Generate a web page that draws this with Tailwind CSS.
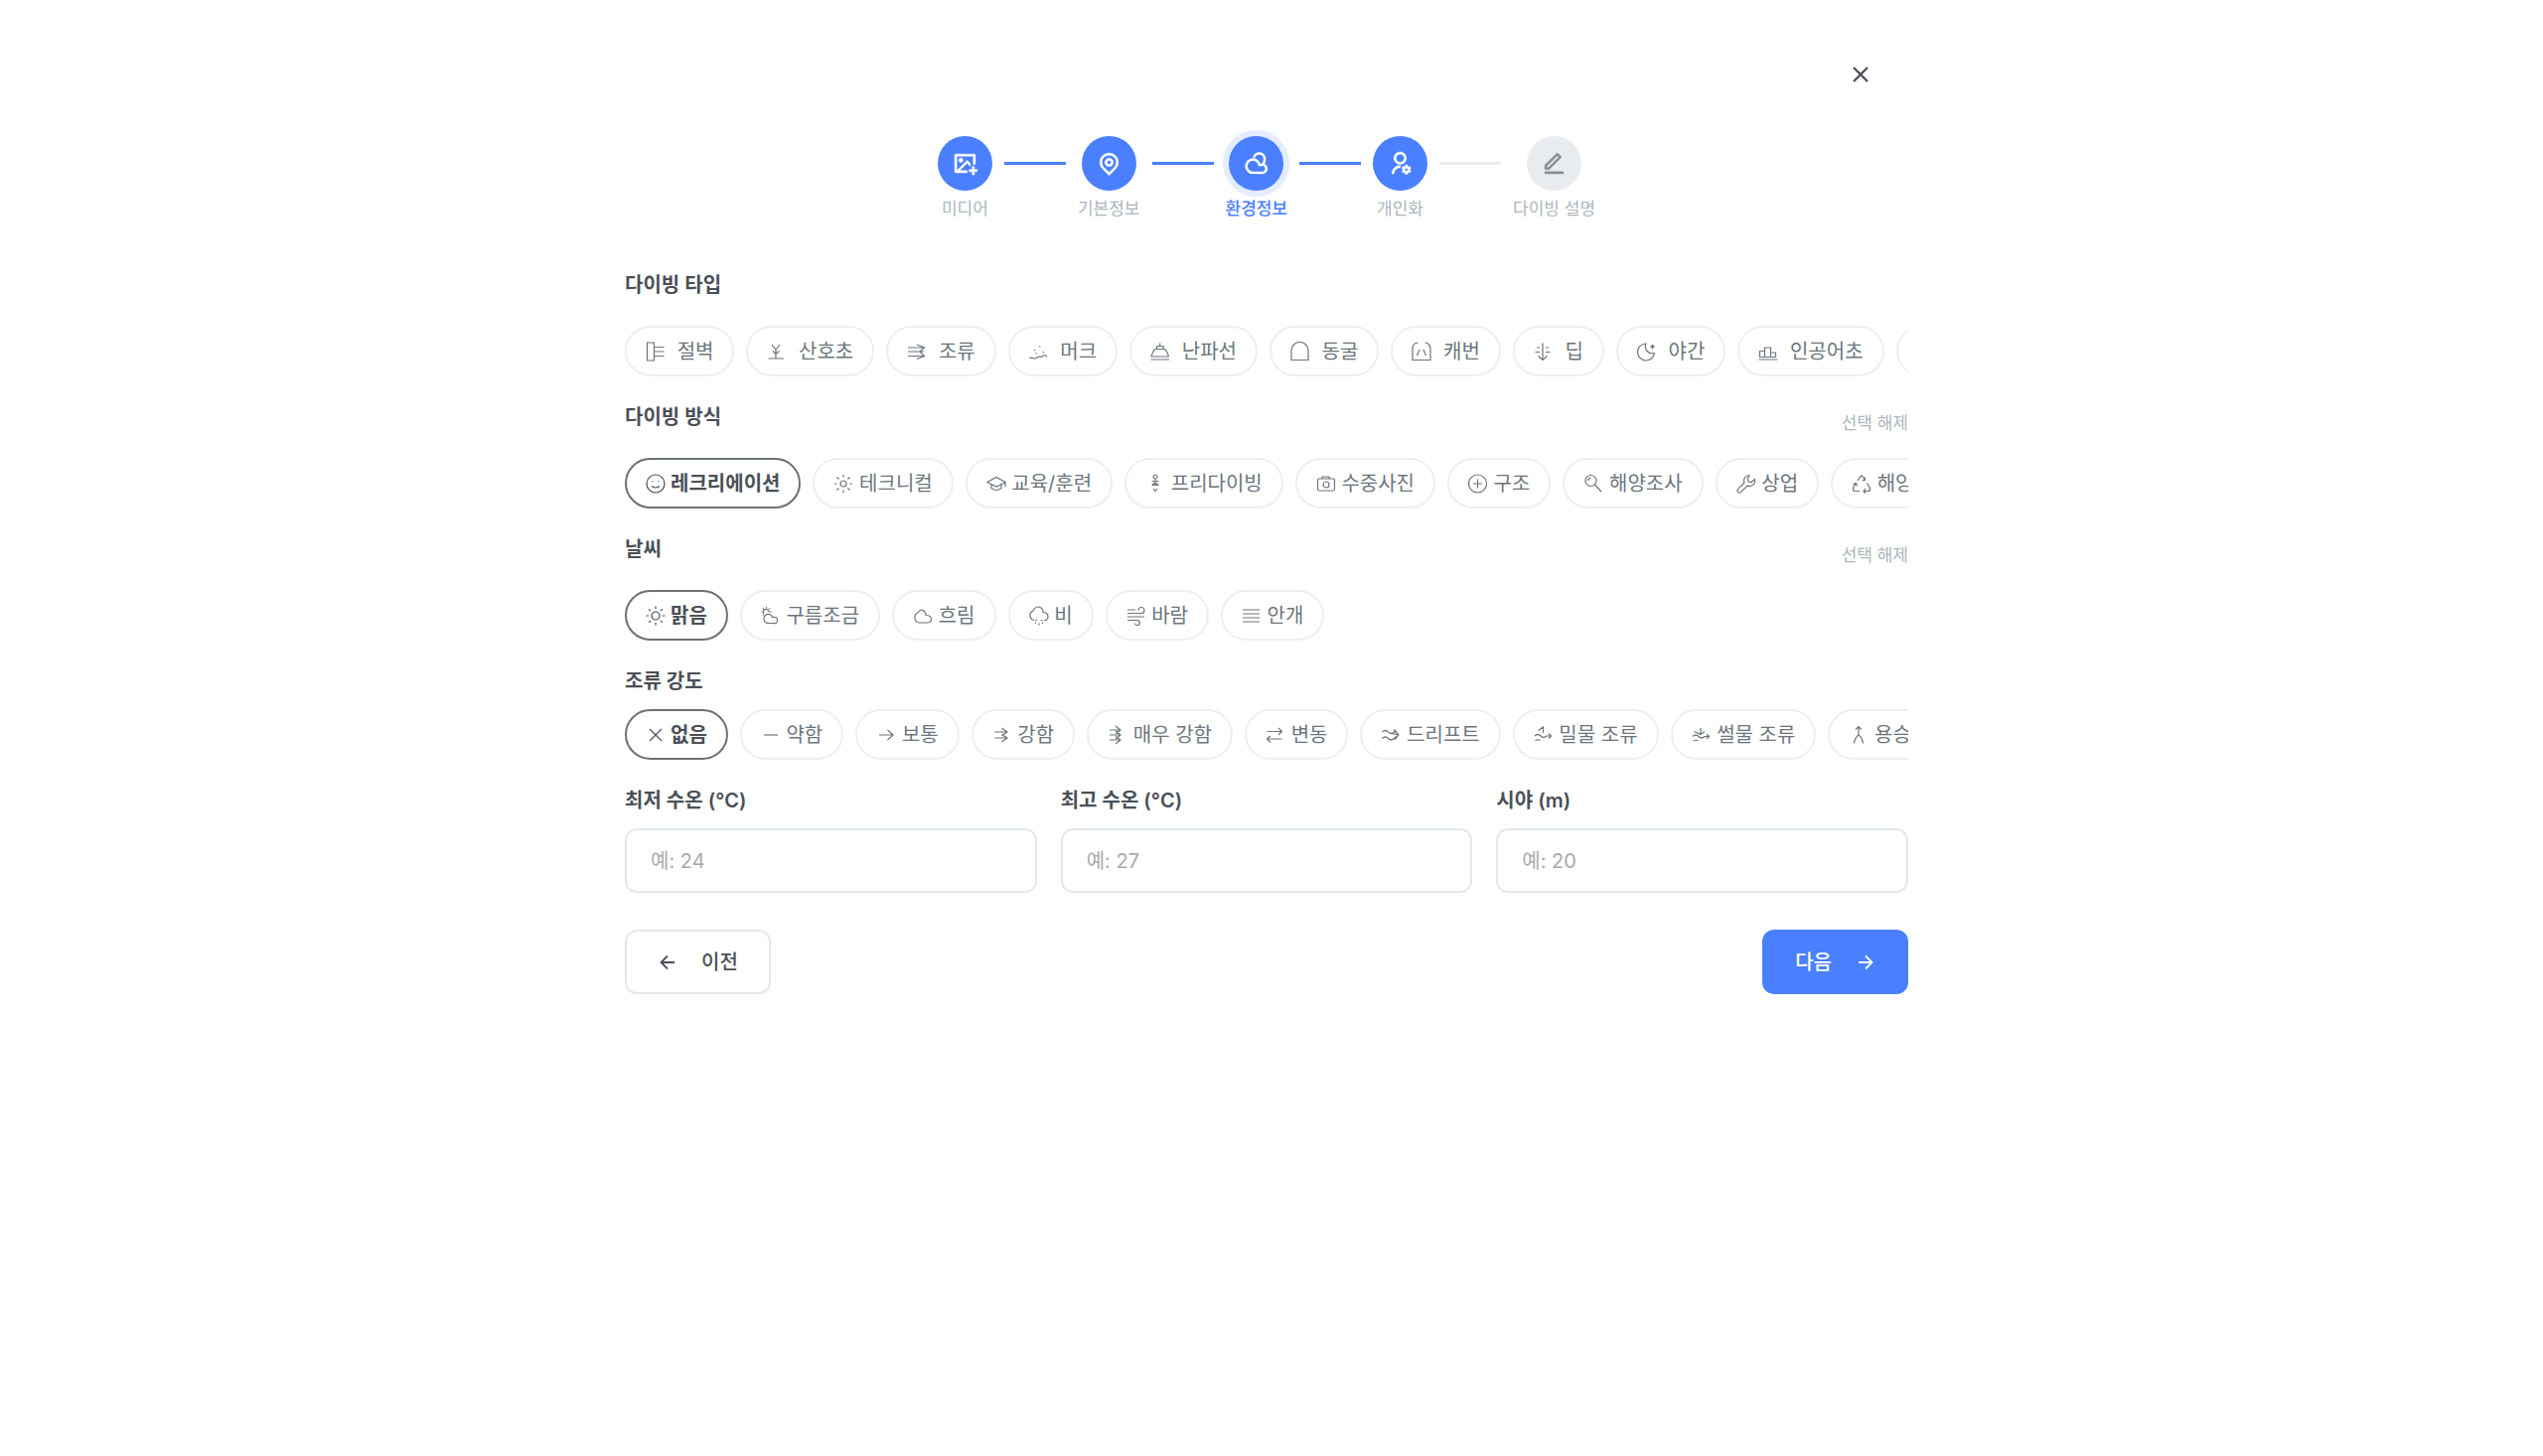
<!DOCTYPE html>
<html lang="ko">
<head>
    <meta charset="UTF-8">
    <meta name="viewport" content="width=device-width, initial-scale=1.0">
    <title>다이빙 로그 - 환경정보</title>
    <script src="https://cdn.jsdelivr.net/npm/@tailwindcss/browser@4"></script>
</head>
<body class="min-h-screen bg-white pr-[10px] font-[Inter,'Noto_Sans_CJK_KR',sans-serif] text-xl leading-7 text-[#495057]">
    <main class="mx-auto max-w-[1292px] pt-[51px]">
        <div class="flex justify-end pr-6">
            <button type="button" aria-label="닫기" class="flex size-12 items-center justify-center">
                <svg class="size-6" viewBox="0 0 24 24" fill="none" stroke="currentColor" stroke-width="2.3"><path d="M5 5l14 14M19 5L5 19"/></svg>
            </button>
        </div>

        <!-- 단계 표시 -->
        <ol class="mt-[38px] flex justify-center gap-3 text-[17px] leading-6 text-[#adb5bd]">
            <li class="flex flex-col items-center gap-[6px]">
                <span class="flex size-[55px] items-center justify-center rounded-full bg-[#4a80ff] text-white">
                    <svg class="size-[25px]" viewBox="0 0 24 24" fill="currentColor" stroke="currentColor" stroke-width="0.5"><path d="M21 15v3h3v2h-3v3h-2v-3h-3v-2h3v-3h2zm.008-12c.548 0 .992.445.992.993V13h-2V5H4v13.999L14 9l3 3v2.829l-3-3L6.827 19H14v2H2.992A.993.993 0 0 1 2 20.007V3.993A1 1 0 0 1 2.992 3h18.016zM8 7a2 2 0 1 1 0 4 2 2 0 0 1 0-4z"/></svg>
                </span>
                <span>미디어</span>
            </li>
            <li class="mt-[26px] h-[3px] w-[62px] bg-[#4a80ff]" aria-hidden="true"></li>
            <li class="flex flex-col items-center gap-[6px]">
                <span class="flex size-[55px] items-center justify-center rounded-full bg-[#4a80ff] text-white">
                    <svg class="size-[25px]" viewBox="0 0 24 24" fill="currentColor" stroke="currentColor" stroke-width="0.5"><path d="M12 23.728l-6.364-6.364a9 9 0 1 1 12.728 0L12 23.728zm4.95-7.778a7 7 0 1 0-9.9 0L12 20.9l4.95-4.95zM12 15a4 4 0 1 1 0-8 4 4 0 0 1 0 8zm0-2a2 2 0 1 0 0-4 2 2 0 0 0 0 4z"/></svg>
                </span>
                <span>기본정보</span>
            </li>
            <li class="mt-[26px] h-[3px] w-[62px] bg-[#4a80ff]" aria-hidden="true"></li>
            <li class="flex flex-col items-center gap-[6px]" aria-current="step">
                <span class="flex size-[55px] items-center justify-center rounded-full bg-[#4a80ff] text-white ring-6 ring-[#e4ecff]">
                    <svg class="size-[25px]" viewBox="0 0 24 24" fill="none" stroke="currentColor" stroke-width="2.4"><path d="M15.300 14.500a6.400 6.400 0 1 0-6.300 6.500h9a3.900 3.900 0 1 0-2.700-6.700M9.900 6.300a5.300 5.300 0 0 1 10.400 1.700q0 3-1.800 4.900"/></svg>
                </span>
                <span class="font-medium text-[#4a80ff]">환경정보</span>
            </li>
            <li class="mt-[26px] h-[3px] w-[62px] bg-[#4a80ff]" aria-hidden="true"></li>
            <li class="flex flex-col items-center gap-[6px]">
                <span class="flex size-[55px] items-center justify-center rounded-full bg-[#4a80ff] text-white">
                    <svg class="size-[25px]" viewBox="0 0 24 24" fill="currentColor" stroke="currentColor" stroke-width="0.5"><path d="M12 14v2a6 6 0 0 0-6 6H4a8 8 0 0 1 8-8zm0-1c-3.315 0-6-2.685-6-6s2.685-6 6-6 6 2.685 6 6-2.685 6-6 6zm0-2c2.21 0 4-1.79 4-4s-1.79-4-4-4-4 1.79-4 4 1.79 4 4 4zm2.595 7.812a3.51 3.51 0 0 1 0-1.623l-.992-.573 1-1.732.992.573A3.496 3.496 0 0 1 17 14.645V13.5h2v1.145c.532.158 1.012.44 1.405.812l.992-.573 1 1.732-.992.573a3.51 3.51 0 0 1 0 1.622l.992.573-1 1.732-.992-.573a3.496 3.496 0 0 1-1.405.812V22.5h-2v-1.145a3.496 3.496 0 0 1-1.405-.812l-.992.573-1-1.732.992-.572zM18 19.5a1.5 1.5 0 1 0 0-3 1.5 1.5 0 0 0 0 3z"/></svg>
                </span>
                <span>개인화</span>
            </li>
            <li class="mt-[26px] h-[3px] w-[62px] bg-[#e9ecef]" aria-hidden="true"></li>
            <li class="flex flex-col items-center gap-[6px]">
                <span class="flex size-[55px] items-center justify-center rounded-full bg-[#e9ecef] text-[#868e96]">
                    <svg class="size-[25px]" viewBox="0 0 24 24" fill="currentColor" stroke="currentColor" stroke-width="0.5"><path d="M6.414 16L16.556 5.858l-1.414-1.414L5 14.586V16h1.414zm.829 2H3v-4.243L14.435 2.322a1 1 0 0 1 1.414 0l2.829 2.829a1 1 0 0 1 0 1.414L7.243 18zM3 20h18v2H3v-2z"/></svg>
                </span>
                <span>다이빙 설명</span>
            </li>
        </ol>

        <form class="mt-[51px] flex flex-col gap-[27px]">
            <section>
                <div class="mb-[15px] flex h-10 items-start justify-between">
                    <h2 class="font-semibold">다이빙 타입</h2>
                </div>
                <div id="dive-type" class="flex gap-3 overflow-x-auto [scrollbar-width:none]"></div>
            </section>

            <section>
                <div class="mb-[15px] flex h-10 items-start justify-between">
                    <h2 class="font-semibold">다이빙 방식</h2>
                    <button type="button" data-clear="dive-style" class="py-2 text-[17px] leading-6 text-[#adb5bd]">선택 해제</button>
                </div>
                <div id="dive-style" class="flex gap-3 overflow-x-auto [scrollbar-width:none]"></div>
            </section>

            <section>
                <div class="mb-[15px] flex h-10 items-start justify-between">
                    <h2 class="font-semibold">날씨</h2>
                    <button type="button" data-clear="weather" class="py-2 text-[17px] leading-6 text-[#adb5bd]">선택 해제</button>
                </div>
                <div id="weather" class="flex gap-3 overflow-x-auto [scrollbar-width:none]"></div>
            </section>

            <section>
                <h2 class="mb-[14px] font-semibold">조류 강도</h2>
                <div id="current" class="flex gap-3 overflow-x-auto [scrollbar-width:none]"></div>
            </section>

            <div class="grid grid-cols-3 gap-6">
                <div>
                    <label for="min-temp" class="mb-[14px] block font-semibold">최저 수온 (°C)</label>
                    <input id="min-temp" type="text" inputmode="decimal" placeholder="예: 24" class="h-[65px] w-full rounded-xl border-2 border-[#e4e8ec] px-6 placeholder:text-[#a9a9a9]">
                </div>
                <div>
                    <label for="max-temp" class="mb-[14px] block font-semibold">최고 수온 (°C)</label>
                    <input id="max-temp" type="text" inputmode="decimal" placeholder="예: 27" class="h-[65px] w-full rounded-xl border-2 border-[#e4e8ec] px-6 placeholder:text-[#a9a9a9]">
                </div>
                <div>
                    <label for="visibility" class="mb-[14px] block font-semibold">시야 (m)</label>
                    <input id="visibility" type="text" inputmode="decimal" placeholder="예: 20" class="h-[65px] w-full rounded-xl border-2 border-[#e4e8ec] px-6 placeholder:text-[#a9a9a9]">
                </div>
            </div>

            <div class="mt-[10px] flex justify-between">
                <button type="button" class="flex h-[65px] items-center gap-6 rounded-xl border-2 border-[#e4e8ec] px-[31px] font-medium">
                    <svg class="size-5" viewBox="0 0 20 20" fill="none" stroke="currentColor" stroke-width="1.8"><path d="M17 10H4M10 3.500L3.500 10l6.500 6.500"/></svg>
                    이전
                </button>
                <button type="submit" class="flex h-[65px] items-center gap-6 rounded-xl border-2 border-[#4a80ff] bg-[#4a80ff] px-[31px] font-medium text-white">
                    다음
                    <svg class="size-5" viewBox="0 0 20 20" fill="none" stroke="currentColor" stroke-width="1.8"><path d="M3 10h13M10 3.500l6.500 6.500-6.500 6.500"/></svg>
                </button>
            </div>
        </form>
    </main>

    <script>
        // [이름, 아이콘 path]
        const groups = {
            "dive-type": [
                ["절벽", "M1.500 1h7v18h-7zM8.500 5.500h10M8.500 10h10M8.500 14.500h10"],
                ["산호초", "M1.500 17h15.500M9 17V8M5 3l4 5 4-5M6 9.500l3 3 3.500-3"],
                ["조류", "M1 6h16M1 10h16M1 14.500h16M10 3l7.500 3-4.500 4 4.500 4.500-7.500 3"],
                ["머크", "M.5 17c2-2 3 0 5 0s3-1.500 4.500-2 1.500 1 3 0 3-3 5 .5M10 5h1.500M5 8.500h1.500M6.500 12h1.500M13.500 10.500h1.500"],
                ["난파선", "M.5 18h18.500M1 15q1-5 4-7.500h9.500q3 2.500 4 7.500zM6.500 7.500V4.500h6.500v3M9.700 4.500V1.500"],
                ["동굴", "M1 18.500V9a8.500 8.500 0 0 1 17 0v9.500z"],
                ["캐번", "M6.500 1C3 1 1 3.500 1 8v10.500h18V8c0-4.500-2-7-5.500-7M8 8l-2.500 6M12 8l2.500 6"],
                ["딥", "M9 1.500v17M4.500 14.500l4.500 4 4.500-4M3 6h3M12 6h3M1.500 10.500h4.500M12 10.500h4.500"],
                ["야간", "M9 2a8.500 8.500 0 1 0 8.500 9.500A7 7 0 0 1 9 2zM15.500 2.500v5M13 5h5M14.500 4l2 2M16.500 4l-2 2"],
                ["인공어초", "M.5 18h19M1.500 15.500V9.500h5v6zM6.500 15.500V6h6v9.500zM12.500 15.500V11h5v4.500z"],
                ["침몰선", "M1.500 13h17l-3 5h-11zM10 13V2"]
            ],
            "dive-style": [
                ["레크리에이션", "M19 10a9 9 0 1 1-18 0 9 9 0 0 1 18 0M6.500 7.500h1M12.500 7.500h1M6 12.500q4 3 8 0"],
                ["테크니컬", "M13 10a3 3 0 1 1-6 0 3 3 0 0 1 6 0M10 1v2.500M10 16.500V19M1 10h2.500M16.500 10H19M3.500 3.500l2 2M14.500 14.500l2 2M3.500 16.500l2-2M14.500 5.500l2-2"],
                ["교육/훈련", "M.8 8.500L10 3.500l9.200 5L10 13zM5 11v3.500q5 4 10 0V11M19 8.500v4.500"],
                ["프리다이빙", "M12 3a2 2 0 1 1-4 0 2 2 0 0 1 4 0M10 5v6M6.500 7.500h7M7 11l3-2 3 2M6.500 11.500h7M8 15l2 2.500 2-2.500"],
                ["수중사진", "M3 5h14q1.500 0 1.500 1.500v9q0 1.500-1.500 1.500h-14Q1.500 17 1.500 15.500v-9Q1.500 5 3 5zM6 5V3h7v2M13 11a3 3 0 1 1-6 0 3 3 0 0 1 6 0"],
                ["구조", "M18.500 10a9 9 0 1 1-18 0 9 9 0 0 1 18 0M9.500 5.500v9M5 10h9"],
                ["해양조사", "M13 7a5.500 5.500 0 1 1-11 0 5.500 5.500 0 0 1 11 0M11.500 11l6.500 7M4.500 7q.3-2.700 3-3"],
                ["상업", "M13 1.500a5.500 5.500 0 0 0-5 7.500L1.700 15.300a2 2 0 0 0 3 3L11 12a5.500 5.500 0 0 0 7.500-6.500l-3.500 3-3-.5-.5-3z"],
                ["해양정화", "M6 7L9 2.500q1-1 2 0l2.500 4M10.500 6.500h3V3.500M15.500 9.500l3 5q.5 2.500-1.500 3h-5M14 15l-2 2.500 2 2M8 17.500H3q-2-.5-1.500-3L4 10M1.500 10.500L4.500 9.500l1 3"]
            ],
            "weather": [
                ["맑음", "M14 10a4 4 0 1 1-8 0 4 4 0 0 1 8 0M10 .5V3M10 17v2.500M.5 10H3M17 10h2.500M3.300 3.300L5 5M15 15l1.700 1.700M3.300 16.700L5 15M15 5l1.700-1.700"],
                ["구름조금", "M7.500 17.500a4.500 4.500 0 1 1 2-8.500c2 1 2 2.500 2 2.500q5-1 5 3t-4 3zM3 8a2.800 2.800 0 1 1 5-1.500M5.500 1v1.500M.5 6H2M2 2.300l1 1.200M9.200 2.300L8 3.500M9 6h1.500M1.800 9.700l1-1"],
                ["흐림", "M6 17a5.500 5.500 0 0 1-.5-10.500Q8.500 2 12 6q1.300 2 1 3.500 5.500 0 5.500 4 0 3.500-4.500 3.500z"],
                ["비", "M5 14.500a5 5 0 0 1-1-9.500q3-6 8-3 2.500 2 2 4.500 5 0 5 4.500 0 3.500-4 3.500M6 14.500h2M11.500 14.500h2M6.500 16.500v1.500M10 17.500v2M13.500 16.500v1.500"],
                ["바람", "M1 7.500h14a3 3 0 1 0-3-3M1 4h8M1 11h17M1 14.500h10a2.500 2.500 0 1 1-2.500 3"],
                ["안개", "M1 4h17M1 8h17M1 12h17M1 16h17"]
            ],
            "current": [
                ["없음", "M4 4l12 12M16 4L4 16"],
                ["약함", "M3 10h14"],
                ["보통", "M3 10h14M11.500 5l5.500 5-5.500 5"],
                ["강함", "M2.500 7h12M2.500 13h12M9.500 3l5.500 4-5.500 3.500M9.500 9.500l5.500 3.500-5.500 4"],
                ["매우 강함", "M2 5h11M2 10h11M2 15h11M8 1l5 4-5 3.500M8 6l5 4-5 4M8 11.500l5 3.500-5 4"],
                ["변동", "M1.500 6.500h15M13 3l3.500 3.500-3.500 3.500M16.500 14h-15M5 11l-3.500 3L5 17.500"],
                ["드리프트", "M1.500 7q3-3 6 0t6 0l2.500-1M1.500 13.500q3-3 6 0t6 0l2-2M13 4.500l5 5.500-4 4.500M9 8l9 2"],
                ["밀물 조류", "M1 11q3-3 6 0t6 0h4.500M15 8.500l2.500 2.500-2.500 2.500M1.500 15.500q3-1.500 5 0M9.500 8V2l-5 3.500"],
                ["썰물 조류", "M1 11.500q3-3 6 0t6 0h4.500M15 9l2.500 2.500L15 14M1.500 16q3-1.500 5 0M9 3v6.500M2.500 6.500l6.500 3L13 6.500"],
                ["용승", "M10 1.500v9M7 4.500l3-3 3 3M10 10q-4 3-4.500 8.500M10 10q4 3 4.500 8.500"]
            ]
        };
        const selected = { "dive-style": "레크리에이션", "weather": "맑음", "current": "없음" };

        function renderGroup(id) {
            const box = document.getElementById(id);
            box.innerHTML = "";
            groups[id].forEach(([name, path]) => {
                const on = selected[id] === name;
                const chip = document.createElement("button");
                chip.type = "button";
                chip.setAttribute("aria-pressed", on);
                chip.className = "flex h-[51px] shrink-0 items-center rounded-full border-2 px-[19px] whitespace-pre";
                chip.classList.add(...(on ? ["border-[#6b7177]", "font-semibold"] : ["border-[#eceff2]", "text-[#6c757d]"]));
                if (id === "dive-type") chip.classList.add("gap-[6px]");
                chip.innerHTML = `<svg class="size-5" viewBox="0 0 20 20" fill="none" stroke="currentColor" stroke-width="1.2"><path d="${path}"/></svg><span> ${name}</span>`;
                chip.addEventListener("click", () => {
                    selected[id] = name;
                    renderGroup(id);
                });
                box.appendChild(chip);
            });
        }

        Object.keys(groups).forEach(renderGroup);

        document.querySelectorAll("[data-clear]").forEach(button => {
            button.addEventListener("click", () => {
                delete selected[button.dataset.clear];
                renderGroup(button.dataset.clear);
            });
        });
    </script>
</body>
</html>
